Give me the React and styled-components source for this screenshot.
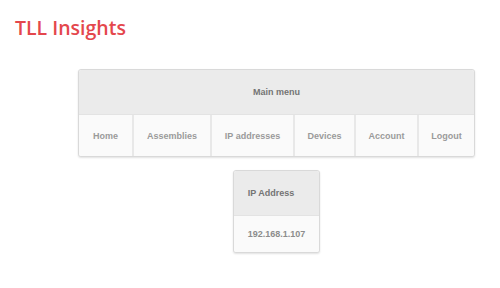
import React from 'react';
import styled, { createGlobalStyle } from 'styled-components';

const GlobalStyle = createGlobalStyle`
  html, body {
    margin: 0;
    padding: 0;
    background: #ffffff;
  }
`;

const Page = styled.div`
  width: 500px;
  height: 288px;
  font-family: "Liberation Sans", Arial, sans-serif;
`;

const Title = styled.h1`
  margin: 0;
  padding: 14px 0 0 15px;
  height: 30px;
  font-family: "Open Sans", sans-serif;
  font-size: 19.5px;
  font-weight: 600;
  color: #e4474c;
`;

const Content = styled.div`
  display: flex;
  flex-direction: column;
  align-items: center;
  padding: 25px 0 0 53px;
  gap: 13px;
`;

const Panel = styled.div`
  display: flex;
  flex-direction: column;
  border: 1px solid #d9d9d9;
  border-radius: 3px;
  box-shadow: 0 1px 2px rgba(0, 0, 0, 0.12);
  overflow: hidden;
  background: #fafafa;
`;

const PanelHead = styled.div`
  display: flex;
  align-items: center;
  justify-content: ${p => (p.$left ? 'flex-start' : 'center')};
  height: 44px;
  padding: 0 ${p => (p.$left ? '14px' : '0')};
  background: #ebebeb;
  border-bottom: 1px solid #e3e3e3;
  font-size: 9px;
  font-weight: bold;
  color: #747474;
`;

const NavRow = styled.div`
  display: flex;
`;

const NavItem = styled.a`
  display: flex;
  align-items: center;
  justify-content: center;
  height: 41px;
  box-sizing: border-box;
  background: #fafafa;
  border-left: 2px solid #e8e8e8;
  font-size: 9px;
  font-weight: bold;
  white-space: nowrap;
  color: #9a9a9a;
  cursor: pointer;

  &:first-child {
    border-left: none;
  }
`;

const Cell = styled.div`
  display: flex;
  align-items: center;
  height: 36px;
  padding: 0 14px;
  background: #fafafa;
  font-size: 9px;
  font-weight: bold;
  color: #8c8c8c;
`;

const menu = [
  { label: 'Home', width: 53 },
  { label: 'Assemblies', width: 78 },
  { label: 'IP addresses', width: 83 },
  { label: 'Devices', width: 61 },
  { label: 'Account', width: 63 },
  { label: 'Logout', width: 57 },
];

const App = () => (
  <Page>
    <GlobalStyle />
    <Title>TLL Insights</Title>
    <Content>
      <Panel>
        <PanelHead>Main menu</PanelHead>
        <NavRow>
          {menu.map(item => (
            <NavItem key={item.label} style={{ width: item.width }}>
              {item.label}
            </NavItem>
          ))}
        </NavRow>
      </Panel>
      <Panel>
        <PanelHead $left>IP Address</PanelHead>
        <Cell>192.168.1.107</Cell>
      </Panel>
    </Content>
  </Page>
);

export default App;
